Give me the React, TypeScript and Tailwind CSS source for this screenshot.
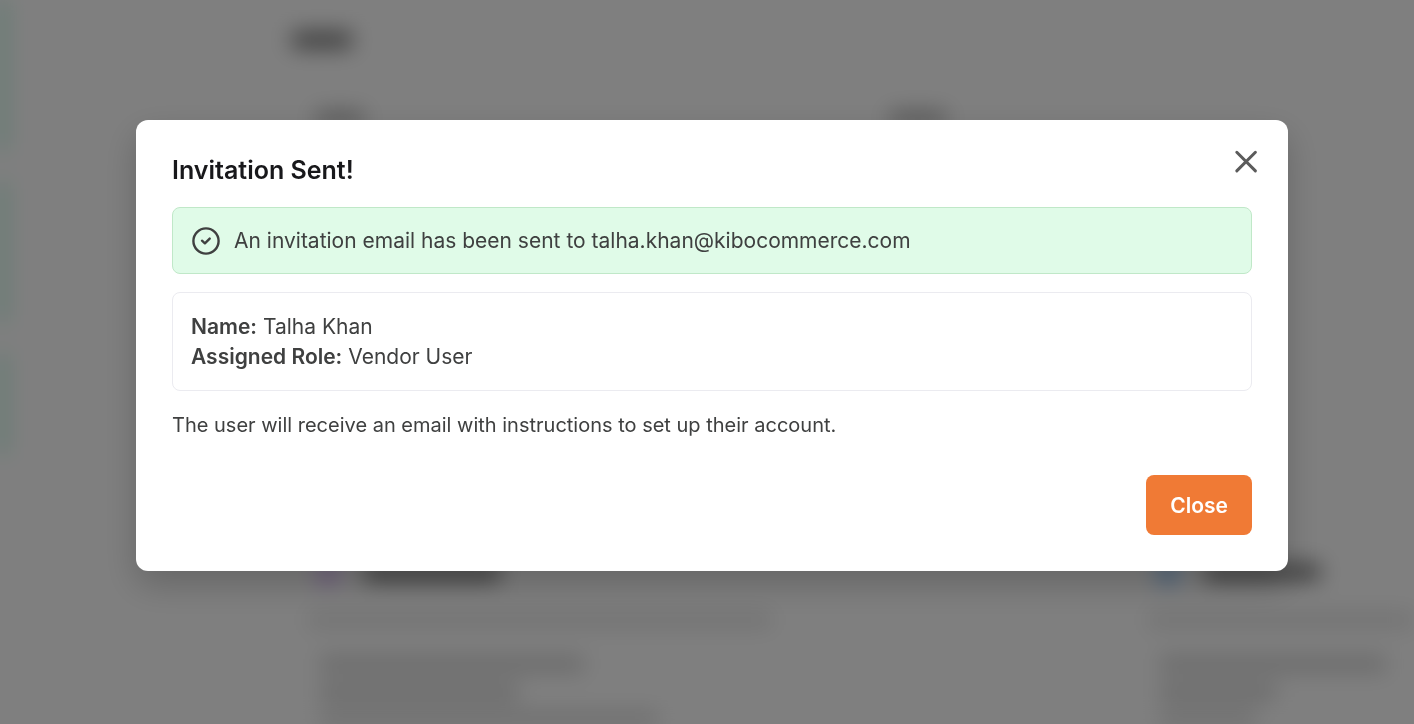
import React from 'react';
import clsx from 'clsx';

const NAV_ITEMS = [
  { id: 'overview', style: 'h-[150px]' },
  { id: 'orders', style: 'h-[140px]' },
  { id: 'users', style: 'h-[100px]' },
];

const ROLES = [
  {
    id: 'admin',
    icon: 'bg-purple-300',
    heading: 'w-[136px]',
    description: 'w-[464px]',
    lines: ['w-[264px]', 'w-[198px]', 'w-[338px]'],
  },
  {
    id: 'vendor',
    icon: 'bg-blue-300',
    heading: 'w-[116px]',
    description: 'w-[290px]',
    lines: ['w-[226px]', 'w-[116px]', 'w-[96px]'],
  },
];

/* Users page behind the dialog, out of focus while it is open */
const PageBehind: React.FC = () => (
  <div aria-hidden="true" className="flex h-screen overflow-hidden bg-white blur-[11px]">
    <nav className="flex w-[268px] shrink-0 flex-col gap-8 border-r border-gray-100">
      {NAV_ITEMS.map((item) => (
        <div key={item.id} className={clsx('w-1 bg-emerald-300', item.style)} />
      ))}
    </nav>

    <main className="flex min-w-0 grow flex-col justify-between overflow-hidden pt-8">
      <div>
        <div className="ml-6 h-4 w-[60px] rounded bg-neutral-500" />
        <div className="mt-16 ml-12 flex">
          <div className="w-[574px]">
            <div className="h-3 w-12 bg-neutral-400" />
          </div>
          <div className="h-3 w-14 bg-neutral-400" />
        </div>
      </div>

      <div className="ml-10 flex">
        {ROLES.map((role) => (
          <div key={role.id} className="w-[840px] shrink-0">
            <div className="flex items-center gap-6 pl-2">
              <div className={clsx('size-6 rounded-full', role.icon)} />
              <div className={clsx('h-4 bg-neutral-500', role.heading)} />
            </div>
            <div className={clsx('mt-7 h-4 bg-neutral-200', role.description)} />
            <div className="mt-7 flex flex-col gap-3 pl-3">
              {role.lines.map((line) => (
                <div key={line} className={clsx('h-4 bg-neutral-300 last:h-3', line)} />
              ))}
            </div>
          </div>
        ))}
      </div>
    </main>
  </div>
);

const CheckIcon: React.FC = () => (
  <svg
    viewBox="0 0 28 28"
    className="size-7 shrink-0"
    fill="none"
    stroke="currentColor"
    strokeLinecap="round"
    strokeLinejoin="round"
    aria-hidden="true"
  >
    <circle cx="14" cy="14" r="12.6" strokeWidth="2.4" />
    <path d="M10 13.7l2.9 2.6 4.8-4.7" strokeWidth="2.4" />
  </svg>
);

const CloseIcon: React.FC = () => (
  <svg
    viewBox="0 0 24 24"
    className="size-6"
    fill="none"
    stroke="currentColor"
    strokeWidth="3"
    strokeLinecap="round"
    aria-hidden="true"
  >
    <path d="M2.8 2.3l18.6 18.6M21.4 2.3L2.8 20.9" />
  </svg>
);

export default function App() {
  return (
    <div className="min-h-screen overflow-hidden bg-white font-['Inter',sans-serif]">
      <PageBehind />

      {/* Overlay */}
      <div className="fixed inset-0 flex items-start justify-center overflow-hidden bg-black/50 pt-[120px] pl-[10px]">
        <div
          role="dialog"
          aria-modal="true"
          aria-labelledby="dialog-title"
          className="relative w-full max-w-6xl rounded-xl bg-white p-9 text-[21px] leading-[30px] text-[#3f4040] shadow-[0_14px_34px_rgba(0,0,0,0.2)]"
        >
          <h2 id="dialog-title" className="text-[25px] leading-7 font-semibold text-[#18181b]">
            Invitation Sent!
          </h2>
          <button
            type="button"
            aria-label="Dismiss"
            className="absolute top-[30px] right-[30px] cursor-pointer text-[#5b5b5b]"
          >
            <CloseIcon />
          </button>

          {/* Success message */}
          <div
            role="status"
            className="mt-[23px] flex items-center gap-[14px] rounded-lg border border-[#c0e8c8] bg-[#e0fbe8] px-[19px] pt-[18px] pb-[17px]"
          >
            <CheckIcon />
            <p>An invitation email has been sent to talha.khan@kibocommerce.com</p>
          </div>

          {/* User details */}
          <div className="mt-[18px] rounded-lg border border-[#ebebf0] px-[18px] pt-[19px] pb-[18px]">
            <p>
              <strong className="font-semibold">Name:</strong> Talha Khan
            </p>
            <p>
              <strong className="font-semibold">Assigned Role:</strong> Vendor User
            </p>
          </div>

          <p className="mt-[19px] text-[20px]">
            The user will receive an email with instructions to set up their account.
          </p>

          <div className="mt-[35px] flex justify-end">
            <button
              type="button"
              className="cursor-pointer rounded-lg bg-[#f07a35] px-6 pt-4 pb-[14px] font-semibold text-white"
            >
              Close
            </button>
          </div>
        </div>
      </div>
    </div>
  );
}
